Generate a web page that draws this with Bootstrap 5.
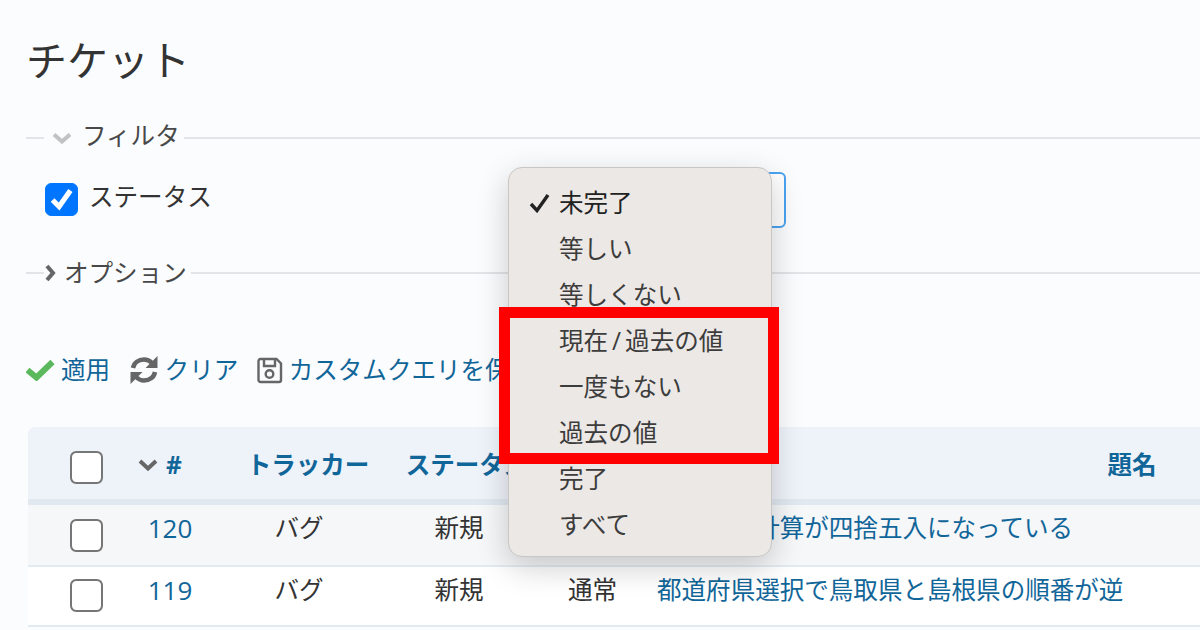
<!DOCTYPE html>
<html lang="ja">
<head>
    <meta charset="UTF-8">
    <meta name="viewport" content="width=device-width, initial-scale=1.0">
    <title>チケット</title>
    <link href="https://cdn.jsdelivr.net/npm/bootstrap@5.3.3/dist/css/bootstrap.min.css" rel="stylesheet">
    <style>
        html, body { height: 100%; overflow: hidden; }
        body {
            background: #fbfcfe;
            color: #333;
            font-family: "Open Sans", "Noto Sans CJK JP", sans-serif;
            font-size: 24.55px;
            line-height: 34px;
        }
        a { color: #116699; text-decoration: none; }
        .page-wrap { position: relative; width: 1200px; height: 630px; padding-left: 26px; overflow: hidden; }
        .page-title { font-size: 41px; line-height: 48px; font-weight: 400; margin: 34px 0 0 0; color: #333; font-family: "Noto Sans CJK JP", sans-serif; }

        .legend-row { height: 34px; color: #484848; }
        .legend-row .lead-rule { width: 18px; flex: none; }
        .rule-line { height: 2px; background: #e2e4e8; display: block; }
        .filters { margin-top: 39px; }
        .options { margin-top: 28px; }
        .legend-text { margin: -4px 0 0 10px; padding-right: 4px; }

        .filter-row { height: 56px; margin-top: 17px; padding-left: 19px; }
        .status-check { width: 33px; height: 33px; margin: 11px 11px 0 0; flex: none; border-radius: 5px; }
        .form-check-input.status-check:checked[type=checkbox] {
            background-color: #0075ff;
            border-color: #0075ff;
            background-size: 100% 100%;
            background-image: url("data:image/svg+xml,%3csvg xmlns='http://www.w3.org/2000/svg' viewBox='0 0 33 33'%3e%3cpath fill='none' stroke='%23fff' stroke-width='5.500' d='M7 17l7 7L26 7'/%3e%3c/svg%3e");
        }
        .filter-label { width: 440px; margin-top: 8px; flex: none; }
        .op-select { width: 257px; height: 56px; background-image: none; background-color: #fff; border: 2px solid #4aa3f0; border-radius: 6px; }

        .action-row { height: 40px; margin-top: 60px; gap: 18.500px; white-space: nowrap; }
        .action-row a { display: flex; align-items: center; gap: 6px; }

        .table-clip { margin: 37px 0 0 2px; overflow: hidden; border-radius: 7px 0 0 0; }
        .ticket-table { width: 1591px; table-layout: fixed; margin: 0; border-collapse: separate; border-spacing: 0; --bs-table-bg: transparent; color: #333; }
        .ticket-table th, .ticket-table td { padding: 0; text-align: center; vertical-align: top; box-shadow: none; }
        .ticket-table thead th { height: 78px; padding-top: 21px; background: #eef2f9; border-bottom: 6px solid #e1e8f0; font-weight: 700; }
        .ticket-table thead th a { font-weight: 700; }
        .ticket-table tbody td { border-bottom: 2px solid #e3ebf2; padding-top: 6px; }
        .row-odd td { height: 62px; background: #f6f7f9; }
        .row-even td { height: 60px; background: #fff; }
        .ticket-table tbody .row-even td.cell-check { padding: 12px 0 0 26px; }
        .ticket-table tbody .row-odd td.cell-check { padding: 14px 0 0 26px; }
        .ticket-table thead th.cell-check { padding: 24px 0 0 26px; }
        .ticket-table thead th.cell-id { padding-right: 20px; }
        .cell-id a { font-size: 26px; }
        .ticket-table thead th.cell-id a { font-size: 24.55px; }
        .ticket-table tbody td.cell-tracker { padding-right: 18px; }
        .ticket-table tbody td.cell-status { padding-right: 16px; }
        .ticket-table tbody td.cell-subject { text-align: left; padding-left: 12px; }
        .row-box { display: block; width: 33px; height: 33px; margin: 0 auto; border: 2px solid #767676; border-radius: 5px; background-color: #fff; }
        .form-check-input.row-box { margin-top: 0; float: none; }
        .sort-mark { margin: -4px 8px 0 0; vertical-align: middle; }

        .status-menu { left: 508px; top: 167px; width: 264px; height: 390px; margin: 0; padding: 12px 0 10px; background: #ece8e5; border: 1px solid #c9c6c3; border-radius: 14px; box-shadow: 0 10px 32px rgba(0, 0, 0, .2); font-size: 24.55px; color: #3c3c3c; }
        .status-menu .dropdown-item { position: relative; height: 46px; line-height: 46px; padding: 0 0 0 50px; color: #3c3c3c; }
        .status-menu .dropdown-item.active, .status-menu .dropdown-item:active { background: none; color: #222; }
        .menu-tick { position: absolute; left: 20px; top: 13px; }
        .menu-slash { margin: 0 4px; }
        .red-frame { position: absolute; z-index: 1001; left: 499px; top: 307px; width: 280px; height: 157px; border: 11px solid #ff0000; pointer-events: none; }
    </style>
</head>
<body>
    <div class="page-wrap">
        <h2 class="page-title">チケット</h2>

        <div class="legend-row filters d-flex align-items-center">
            <span class="rule-line lead-rule"></span>
            <svg class="ms-2" width="20" height="12" viewBox="0 0 20 12" aria-hidden="true"><path d="M2 2.500 10 9.500 18 2.500" fill="none" stroke="#c2c2c2" stroke-width="4"/></svg>
            <span class="legend-text">フィルタ</span>
            <span class="rule-line flex-grow-1"></span>
        </div>

        <div class="filter-row d-flex align-items-start">
            <input class="form-check-input status-check" type="checkbox" id="cb-status" checked>
            <label class="filter-label" for="cb-status">ステータス</label>
            <select class="form-select op-select" aria-label="ステータス"><option></option></select>
        </div>

        <div class="legend-row options d-flex align-items-center">
            <span class="rule-line lead-rule"></span>
            <svg width="12" height="20" viewBox="0 0 12 20" aria-hidden="true"><path d="M3 3 9 10 3 17" fill="none" stroke="#666" stroke-width="4"/></svg>
            <span class="ms-2 pe-1">オプション</span>
            <span class="rule-line flex-grow-1"></span>
        </div>

        <div class="action-row d-flex align-items-center">
            <a href="#">
                <svg width="29" height="22" viewBox="0 0 29 22" aria-hidden="true"><path d="M1.500 11 10.500 18.500 26.500 3" fill="none" stroke="#5cb85c" stroke-width="6"/></svg>
                適用
            </a>
            <a href="#">
                <svg width="30" height="30" viewBox="0 0 30 30" aria-hidden="true">
                    <path d="M4 13C5 7.500 9.500 4.500 15 4.500c3.500 0 6 1.500 8 3.500" fill="none" stroke="#666" stroke-width="4.500"/>
                    <path d="M28.500 1v12h-12z" fill="#666"/>
                    <path d="M26 17c-1 5.500-5.500 8.500-11 8.500-3.500 0-6-1.500-8-3.500" fill="none" stroke="#666" stroke-width="4.500"/>
                    <path d="M1.500 29V17h12z" fill="#666"/>
                </svg>
                クリア
            </a>
            <a href="#">
                <svg width="26" height="27" viewBox="0 0 26 27" aria-hidden="true">
                    <path d="M1.500 4a2 2 0 0 1 2-2h16l4.500 4.500V23a2 2 0 0 1-2 2h-18.500a2 2 0 0 1-2-2z" fill="none" stroke="#666" stroke-width="2.400"/>
                    <path d="M7 2.500v6.500h11V2.500" fill="none" stroke="#666" stroke-width="2.400"/>
                    <circle cx="12.500" cy="17" r="3.800" fill="none" stroke="#666" stroke-width="2.400"/>
                </svg>
                カスタムクエリを保存
            </a>
        </div>

        <div class="table-clip">
            <table class="table ticket-table">
                <colgroup>
                    <col style="width: 90px">
                    <col style="width: 104px">
                    <col style="width: 172px">
                    <col style="width: 146px">
                    <col style="width: 105px">
                    <col style="width: 974px">
                </colgroup>
                <thead>
                    <tr>
                        <th class="cell-check"><input class="form-check-input row-box" type="checkbox" aria-label="すべて選択"></th>
                        <th class="cell-id"><svg class="sort-mark" width="20" height="12" viewBox="0 0 20 12" aria-hidden="true"><path d="M2 2 10 9.500 18 2" fill="none" stroke="#666" stroke-width="4"/></svg><a href="#">#</a></th>
                        <th><a href="#">トラッカー</a></th>
                        <th><a href="#">ステータス</a></th>
                        <th><a href="#">優先度</a></th>
                        <th><a href="#">題名</a></th>
                    </tr>
                </thead>
                <tbody>
                    <tr class="row-odd">
                        <td class="cell-check"><input class="form-check-input row-box" type="checkbox" aria-label="120"></td>
                        <td class="cell-id"><a href="#">120</a></td>
                        <td class="cell-tracker">バグ</td>
                        <td class="cell-status">新規</td>
                        <td>通常</td>
                        <td class="cell-subject"><a href="#">消費税の計算が四捨五入になっている</a></td>
                    </tr>
                    <tr class="row-even">
                        <td class="cell-check"><input class="form-check-input row-box" type="checkbox" aria-label="119"></td>
                        <td class="cell-id"><a href="#">119</a></td>
                        <td class="cell-tracker">バグ</td>
                        <td class="cell-status">新規</td>
                        <td>通常</td>
                        <td class="cell-subject"><a href="#">都道府県選択で鳥取県と島根県の順番が逆</a></td>
                    </tr>
                </tbody>
            </table>
        </div>

        <ul class="dropdown-menu show status-menu">
            <li><a class="dropdown-item active" href="#">
                <svg class="menu-tick" width="21" height="20" viewBox="0 0 21 20" aria-hidden="true"><path d="M2 11 8 17.500 19 2" fill="none" stroke="#222" stroke-width="3.400"/></svg>
                未完了</a></li>
            <li><a class="dropdown-item" href="#">等しい</a></li>
            <li><a class="dropdown-item" href="#">等しくない</a></li>
            <li><a class="dropdown-item" href="#">現在<span class="menu-slash">/</span>過去の値</a></li>
            <li><a class="dropdown-item" href="#">一度もない</a></li>
            <li><a class="dropdown-item" href="#">過去の値</a></li>
            <li><a class="dropdown-item" href="#">完了</a></li>
            <li><a class="dropdown-item" href="#">すべて</a></li>
        </ul>
        <div class="red-frame"></div>
    </div>
    <script src="https://cdn.jsdelivr.net/npm/bootstrap@5.3.3/dist/js/bootstrap.bundle.min.js"></script>
</body>
</html>
